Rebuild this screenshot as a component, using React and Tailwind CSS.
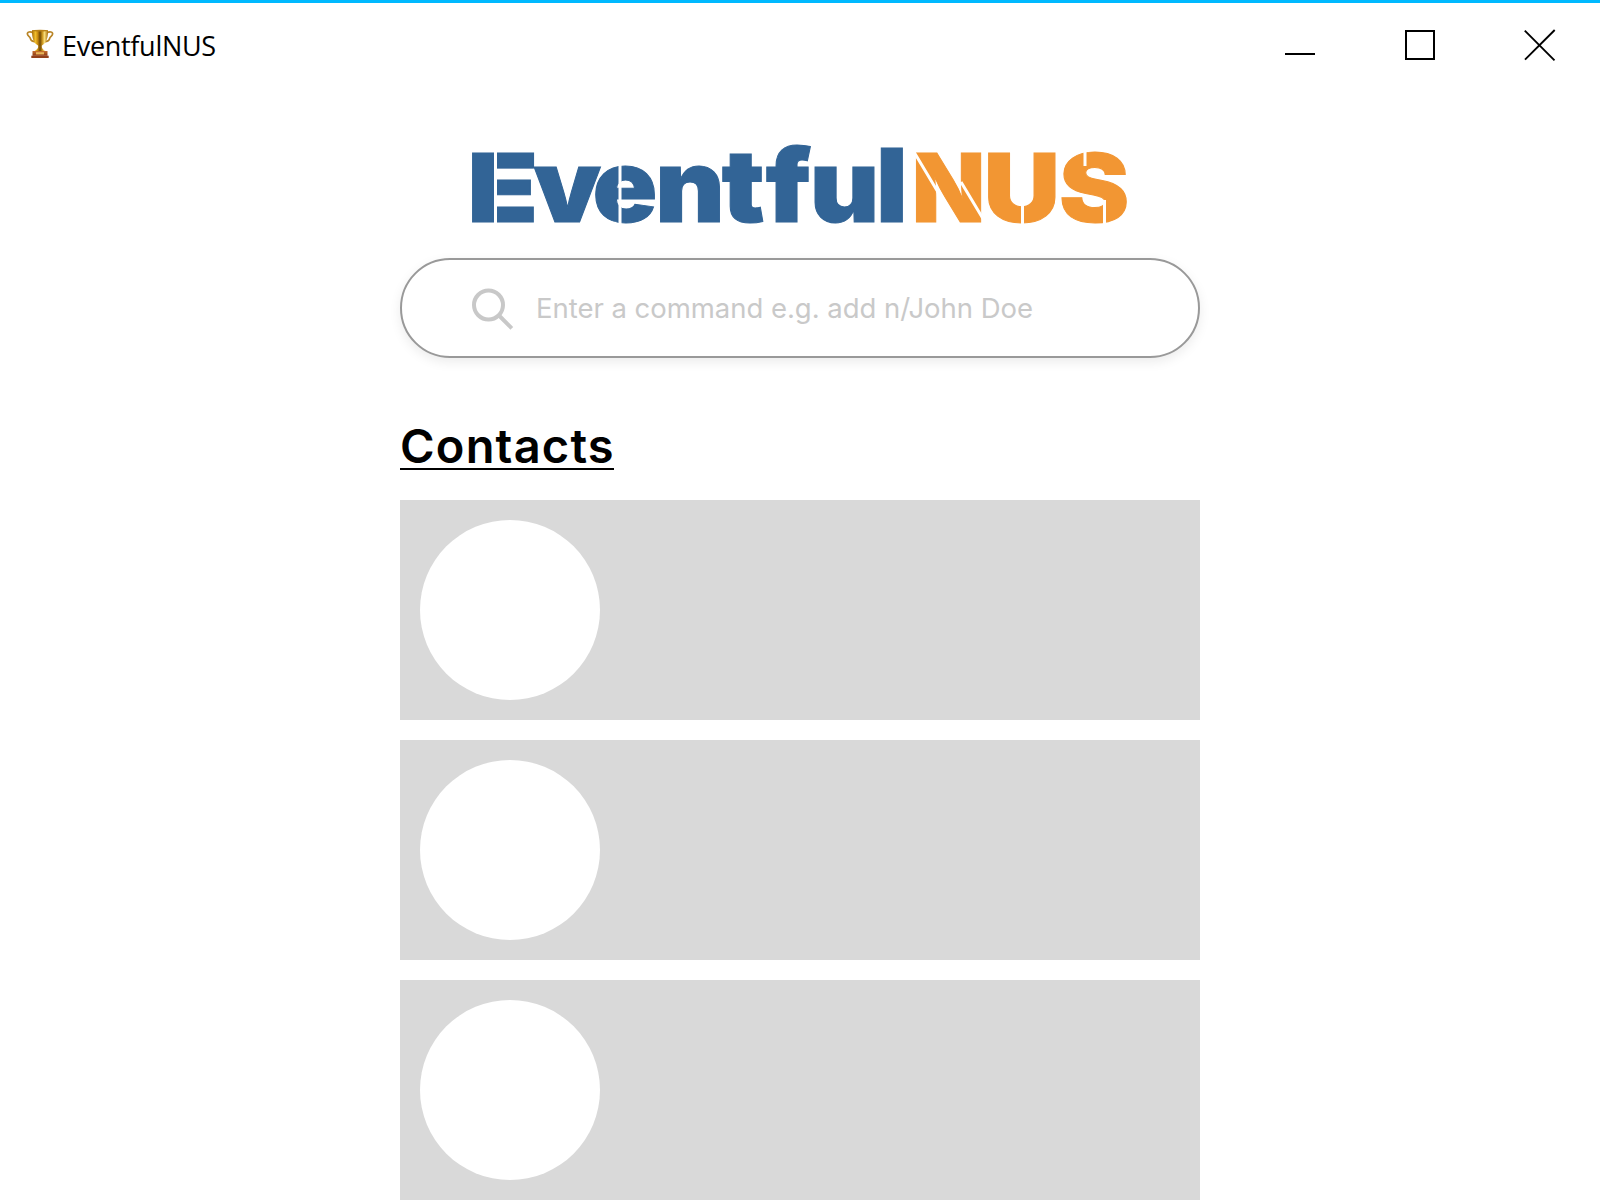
function Trophy() {
  return (
    <svg width="28" height="30" viewBox="0 0 28 30" className="block shrink-0" aria-hidden="true">
      <defs>
        <linearGradient id="gold" x1="0" x2="1" y1="0" y2="0">
          <stop offset="0" stopColor="#a86f0c" />
          <stop offset="0.22" stopColor="#f0bd2a" />
          <stop offset="0.36" stopColor="#c98b10" />
          <stop offset="0.5" stopColor="#6d4706" />
          <stop offset="0.64" stopColor="#c8921a" />
          <stop offset="0.78" stopColor="#f8dc78" />
          <stop offset="1" stopColor="#a86f0c" />
        </linearGradient>
        <linearGradient id="base" x1="0" x2="0" y1="0" y2="1">
          <stop offset="0" stopColor="#c9702f" />
          <stop offset="1" stopColor="#8c3a14" />
        </linearGradient>
      </defs>
      <path d="M7.5 4.200C4.500 2.200 1.200 2.700 1.400 5c.2 2 2.500 2.400 2.900 4.200.4 2 2.500 3.400 5 3.500M20.500 4.200c3-2 6.300-1.500 6.100.8-.2 2-2.500 2.400-2.900 4.200-.4 2-2.500 3.400-5 3.500" fill="none" stroke="#b98526" strokeWidth="1.700" />
      <path d="M6 1.300h16c.2 6.700-1.200 12.500-5.400 14.800-1 .6-1.100 1.300-.8 2.200.5 1.400 1.500 2.400 3.500 3.700H8.700c2-1.300 3-2.300 3.500-3.700.3-.9.200-1.600-.8-2.200C7.200 13.800 5.800 8 6 1.300Z" fill="url(#gold)" />
      <ellipse cx="14" cy="1.700" rx="8" ry="0.900" fill="#b98218" />
      <path d="M12.600 16.800h2.800v1.800h-2.800z" fill="#8a5b0b" />
      <path d="M6.500 22h15v4.800h-15z" fill="url(#base)" />
      <path d="M10 23.200h8v2.200h-8z" fill="#e8b65a" />
      <path d="M5.300 26.700h17.400V29H5.300z" fill="#93401a" />
    </svg>
  );
}

function TitleBar() {
  return (
    <header className="flex h-[90px] items-start justify-between border-t-[3px] border-[#00b9ff] pl-[26px] pr-[44px]">
      <div className="flex items-start pt-[26px]">
        <Trophy />
        <span className="ml-[8px] mt-[1px] whitespace-nowrap font-['Open_Sans','Noto_Sans',sans-serif] text-[27px] leading-[32px] tracking-[-0.3px] text-black">
          EventfulNUS
        </span>
      </div>
      <div className="flex gap-[88px] pt-[26px]">
        <svg width="32" height="32" viewBox="0 0 32 32" aria-label="Minimize">
          <path d="M1 25h30" stroke="#000" strokeWidth="2" />
        </svg>
        <svg width="32" height="32" viewBox="0 0 32 32" aria-label="Maximize">
          <path d="M2 2h28v28H2z" fill="none" stroke="#000" strokeWidth="2" />
        </svg>
        <svg width="32" height="32" viewBox="0 0 32 32" aria-label="Close">
          <path d="M0.800 1.600 30.500 31.300M30.700 1 1 30.700" stroke="#000" strokeWidth="1.900" />
        </svg>
      </div>
    </header>
  );
}

function Wordmark() {
  return (
    <svg width="720" height="140" viewBox="-30 -26 720 140" className="mx-auto -mb-6 block font-['Inter',sans-serif] font-black" aria-label="EventfulNUS">
      <g fill="#326496" stroke="#326496" strokeWidth="1">
        <text transform="scale(1.22 1)" y="81.500" fontSize="95" x="-2.300">E</text>
        <text transform="scale(1.06 1)" y="81.500" fontSize="101" x="60 115.600 174.800 237.400 279 320.600 383">ventful</text>
      </g>
      <g fill="#f29633" stroke="#f29633" strokeWidth="1">
        <text y="81.500" fontSize="95" x="442">N</text>
        <text transform="scale(1.11 1)" y="81.500" fontSize="95" x="462.800 530.600">US</text>
      </g>
      <g stroke="#fff" strokeWidth="3" fill="none">
        <path d="M25.500 8v78M150 22v64M552.500 60v26M615 8v18M634.500 60v26" />
        <path d="M444 12l24.500 41M491 42l24 40" />
      </g>
    </svg>
  );
}

function CommandBox() {
  return (
    <div className="mt-[28px] flex h-[100px] w-full items-center rounded-full border-2 border-[#999] bg-white pl-[70px] shadow-[0_4px_12px_rgba(0,0,0,0.08)]">
      <svg width="42" height="42" viewBox="0 0 42 42" className="mt-px block shrink-0" aria-hidden="true">
        <circle cx="16.500" cy="17" r="14.500" fill="none" stroke="#c8c8c8" strokeWidth="4" />
        <path d="m27 27.500 12.800 12.800" stroke="#c8c8c8" strokeWidth="4" />
      </svg>
      <span className="ml-[22px] whitespace-nowrap font-['Inter',sans-serif] text-[27.500px] font-normal leading-[36px] tracking-[-0.03px] text-[#c9c9c9]">
        Enter a command e.g. add n/John Doe
      </span>
    </div>
  );
}

function ContactCard() {
  return (
    <li className="flex h-[220px] items-center bg-[#d9d9d9] px-5">
      <div className="size-[180px] rounded-full bg-white" />
    </li>
  );
}

export default function App() {
  return (
    <div className="h-[1200px] w-[1600px] overflow-hidden bg-white">
      <TitleBar />
      <main className="mx-auto w-[800px] pt-[24px]">
        <Wordmark />
        <CommandBox />
        <h1 className="mt-[58px] h-[54px] w-[214px] whitespace-nowrap border-b-2 border-black font-['Inter',sans-serif] text-[47px] font-semibold leading-[59px] tracking-[1.200px] text-black">
          Contacts
        </h1>
        <ul className="mt-[30px] flex flex-col gap-5">
          <ContactCard />
          <ContactCard />
          <ContactCard />
        </ul>
      </main>
    </div>
  );
}
